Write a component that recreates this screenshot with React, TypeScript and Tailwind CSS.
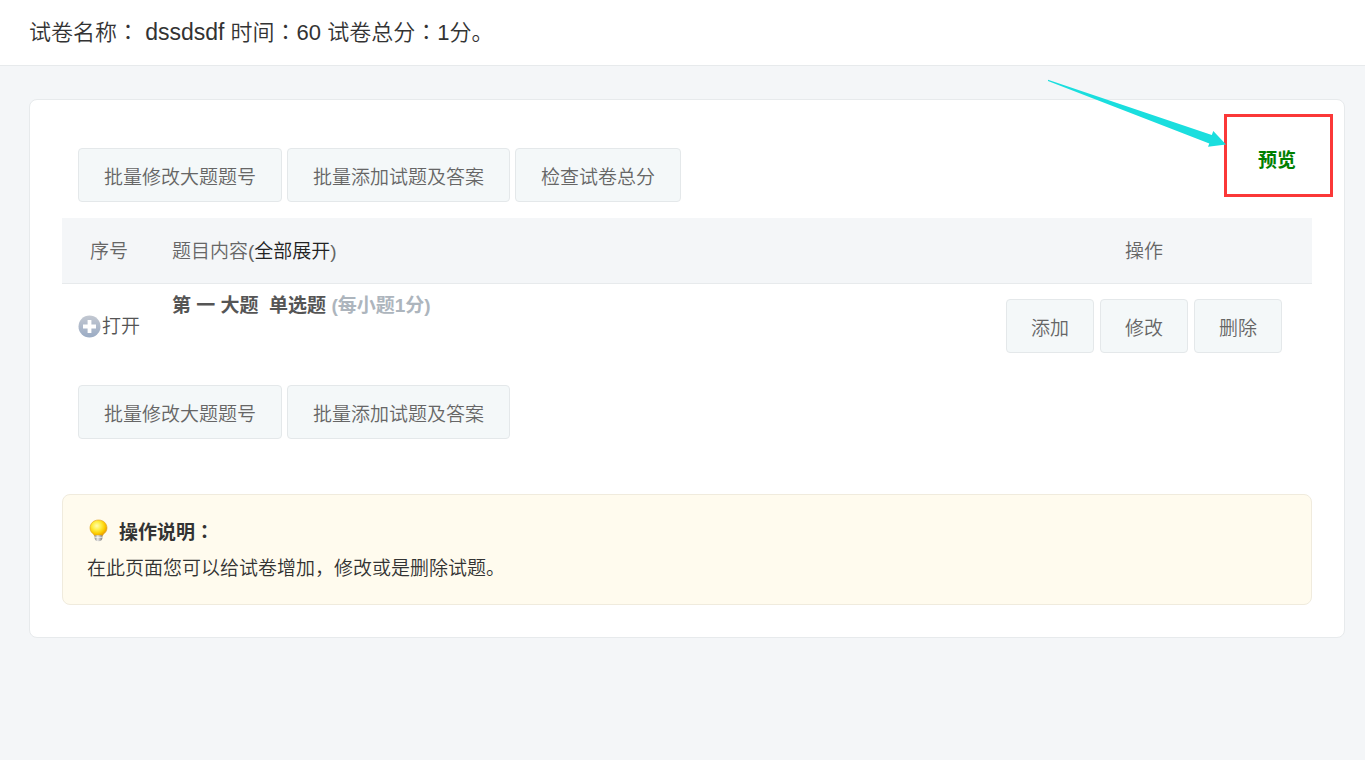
import React from 'react';

interface ActionButtonProps {
  label: string;
  compact?: boolean;
}

// Full-width colon that sits in the middle of its box
function Colon() {
  return <span className="font-['Noto_Sans_CJK_TC',sans-serif] leading-none">：</span>;
}

function ActionButton({ label, compact = false }: ActionButtonProps) {
  return (
    <button
      type="button"
      className={`h-[54px] pt-1.5 rounded border border-[#e4e8ea] bg-[#f4f8f9] text-[#666] whitespace-nowrap cursor-pointer hover:bg-[#eaf1f3] ${
        compact ? 'px-6' : 'px-[25px]'
      }`}
    >
      {label}
    </button>
  );
}

function PlusIcon() {
  return (
    <svg viewBox="0 0 23 23" className="w-[23px] h-[23px] shrink-0" aria-hidden="true">
      <defs>
        <linearGradient id="plus-fill" x1="0" y1="0" x2="0" y2="1">
          <stop offset="0" stopColor="#c3c8d1" />
          <stop offset="1" stopColor="#9aabc4" />
        </linearGradient>
      </defs>
      <circle cx="11.5" cy="11.5" r="11" fill="url(#plus-fill)" />
      <path d="M11.5 5v13M5 11.5h13" stroke="#fff" strokeWidth="3.8" />
    </svg>
  );
}

function BulbIcon() {
  return (
    <svg viewBox="0 0 20 23" className="w-5 h-[23px] mb-1 shrink-0" aria-hidden="true">
      <defs>
        <radialGradient id="bulb-fill" cx="0.4" cy="0.36" r="0.64">
          <stop offset="0" stopColor="#fffcb0" />
          <stop offset="0.4" stopColor="#ffee44" />
          <stop offset="0.75" stopColor="#fccb00" />
          <stop offset="1" stopColor="#e89c00" />
        </radialGradient>
        <linearGradient id="bulb-base" x1="0" y1="0" x2="1" y2="0">
          <stop offset="0" stopColor="#8d8d8d" />
          <stop offset="0.4" stopColor="#e9e9e9" />
          <stop offset="1" stopColor="#7f7f7f" />
        </linearGradient>
      </defs>
      <path
        d="M9.500 1C4.500 1 1 4.600 1 9c0 3.600 2.300 5 4 6.700L5.700 17.200h7.600l.7-1.500c1.700-1.700 4-3.100 4-6.700C18 4.600 14.500 1 9.500 1Z"
        fill="url(#bulb-fill)"
        stroke="#e3a72c"
        strokeWidth="0.7"
      />
      <path d="M5.700 16.300h7.600v3.200c0 1.500-1.700 2.700-3.800 2.700s-3.800-1.200-3.800-2.700Z" fill="url(#bulb-base)" />
      <path d="M6 18.300h7" stroke="#fff" strokeWidth="0.7" />
    </svg>
  );
}

// Red frame and pointer drawn over the preview link
function PreviewHighlight() {
  return (
    <>
      <span className="absolute -left-[34px] -top-[34px] w-[109px] h-[83px] border-3 border-[#fb3838] pointer-events-none" />
      <svg
        viewBox="0 0 180 68"
        className="absolute right-[70px] -top-[69px] w-[180px] h-[68px] max-w-none pointer-events-none"
        aria-hidden="true"
      >
        <path d="M2 .8 2 2 163.300 64.600 162 67.700 180 65.500 167.300 52 165.800 56Z" fill="#1adede" />
      </svg>
    </>
  );
}

export default function App() {
  return (
    <div className="min-h-screen bg-[#f4f6f8] font-['Liberation_Sans','Noto_Sans_CJK_SC',sans-serif] font-[350] text-[19px] leading-9 text-[#333]">
      <header className="h-[66px] flex items-center px-[29px] bg-white border-b border-[#e7eaec]">
        <h1 className="text-[22px] font-[350]">
          试卷名称<Colon /> <span className="text-[23px]">dssdsdf</span> 时间<Colon />60 试卷总分<Colon />1分。
        </h1>
      </header>

      <main className="mt-[33px] ml-[29px] mr-5 px-8 pt-12 pb-8 bg-white border border-[#e7eaec] rounded-lg">
        <div className="flex items-start justify-between px-4 pb-4">
          <div className="flex gap-[5px]">
            <ActionButton label="批量修改大题题号" />
            <ActionButton label="批量添加试题及答案" />
            <ActionButton label="检查试卷总分" />
          </div>
          <a href="#preview" className="relative leading-[26px] font-bold text-[#008000]">
            预览
            <PreviewHighlight />
          </a>
        </div>

        <table className="w-full table-fixed border-collapse text-left">
          <thead>
            <tr className="h-[65px] bg-[#f4f6f8] border-b border-[#e7eaec] text-[#666]">
              <th className="w-[94px] pt-1 font-[350] text-center">序号</th>
              <th className="px-4 pt-1 font-[350]">
                题目内容(
                <button type="button" className="text-[#222] cursor-pointer">全部展开</button>)
              </th>
              <th className="w-[336px] pt-1 font-[350] text-center">操作</th>
            </tr>
          </thead>
          <tbody>
            <tr className="text-[#555]">
              <td className="pl-4 pt-0.5">
                <button type="button" className="flex items-center gap-px whitespace-nowrap cursor-pointer">
                  <PlusIcon />
                  打开
                </button>
              </td>
              <td className="px-4 pt-1 align-top font-bold">
                第 一 大题 &nbsp;单选题 <span className="text-[#adb5bd]">(每小题1分)</span>
              </td>
              <td className="py-[15px]">
                <div className="flex justify-center gap-1.5">
                  <ActionButton label="添加" compact />
                  <ActionButton label="修改" compact />
                  <ActionButton label="删除" compact />
                </div>
              </td>
            </tr>
          </tbody>
        </table>

        <div className="flex gap-[5px] px-4 pt-[17px]">
          <ActionButton label="批量修改大题题号" />
          <ActionButton label="批量添加试题及答案" />
        </div>

        <section className="mt-[55px] px-6 pt-5 pb-[17px] rounded-lg border border-[#f0ebdd] bg-[#fffbee]">
          <h2 className="flex items-center gap-2.5 pl-0.5 font-bold">
            <BulbIcon />
            <span>操作说明<Colon /></span>
          </h2>
          <p>在此页面您可以给试卷增加，修改或是删除试题。</p>
        </section>
      </main>
    </div>
  );
}
